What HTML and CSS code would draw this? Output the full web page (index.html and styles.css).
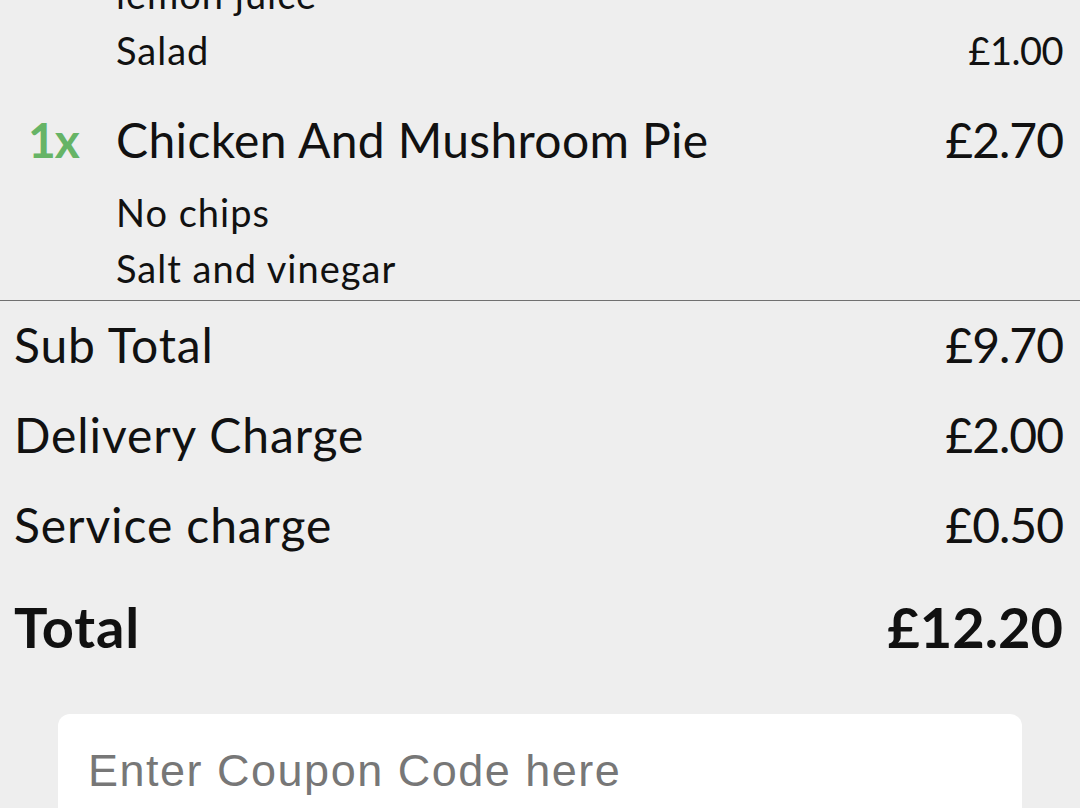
FILE: index.html
```html
<!DOCTYPE html>
<html lang="en">
<head>
<meta charset="utf-8">
<title>Basket</title>
<link rel="stylesheet" href="styles.css">
</head>
<body>
<main class="basket">
  <section class="items">
    <div class="item">
      <ul class="mods">
        <li class="mod"><span class="mod-name">lemon juice</span></li>
        <li class="mod"><span class="mod-name">Salad</span><span class="mod-price">£1.00</span></li>
      </ul>
    </div>
    <div class="item">
      <div class="item-head">
        <span class="qty">1x</span>
        <span class="item-name">Chicken And Mushroom Pie</span>
        <span class="item-price">£2.70</span>
      </div>
      <ul class="mods">
        <li class="mod"><span class="mod-name">No chips</span></li>
        <li class="mod"><span class="mod-name">Salt and vinegar</span></li>
      </ul>
    </div>
  </section>
  <section class="summary">
    <div class="sum-row"><span class="sum-label">Sub Total</span><span class="sum-value">£9.70</span></div>
    <div class="sum-row"><span class="sum-label">Delivery Charge</span><span class="sum-value">£2.00</span></div>
    <div class="sum-row"><span class="sum-label">Service charge</span><span class="sum-value">£0.50</span></div>
    <div class="sum-row total"><span class="sum-label">Total</span><span class="sum-value">£12.20</span></div>
  </section>
  <div class="coupon">
    <input class="coupon-input" type="text" placeholder="Enter Coupon Code here">
  </div>
</main>
</body>
</html>
```
FILE: styles.css
```css
html, body {
  margin: 0;
  padding: 0;
  background: #eeeeee;
  overflow: hidden;
}
body {
  font-family: Lato, "Noto Sans", sans-serif;
  color: #111111;
}
.basket {
  display: flex;
  flex-direction: column;
  margin-top: -34px;
}
.items {
  display: flex;
  flex-direction: column;
  padding-right: 17px;
}
.item + .item {
  margin-top: 30px;
}
.mods {
  list-style: none;
  margin: 0;
  padding: 0 0 0 116px;
}
.mod {
  display: flex;
  justify-content: space-between;
  font-size: 38px;
  line-height: 56px;
}
.mod-name {
  letter-spacing: 1px;
}
.mod-price {
  letter-spacing: -0.5px;
}
.item-head {
  display: grid;
  grid-template-columns: 116px 1fr auto;
  align-items: baseline;
  font-size: 48px;
  line-height: 64px;
  margin-bottom: 12px;
}
.qty {
  padding-left: 28px;
  color: #66b466;
  font-weight: 700;
  letter-spacing: -1px;
}
.item-name {
  letter-spacing: 0.35px;
}
.item-price {
  letter-spacing: -1px;
}
.summary {
  border-top: 1px solid #707070;
  margin-top: 4px;
  padding: 14px 17px 0 14px;
  display: flex;
  flex-direction: column;
  gap: 30px;
}
.sum-row {
  display: flex;
  justify-content: space-between;
  font-size: 48px;
  line-height: 60px;
}
.sum-label {
  letter-spacing: 0.9px;
}
.sum-value {
  letter-spacing: -1px;
}
.sum-row.total {
  margin-top: 7px;
  font-weight: 700;
  font-size: 56px;
  line-height: 70px;
}
.sum-row.total .sum-value {
  letter-spacing: 0;
}
.coupon {
  margin: 52px 58px 0 58px;
}
.coupon-input {
  display: block;
  width: 100%;
  box-sizing: border-box;
  height: 113px;
  border: none;
  border-radius: 12px;
  background: #ffffff;
  padding: 0 30px;
  font-family: "Liberation Sans", Arial, sans-serif;
  font-size: 45px;
  letter-spacing: 1.5px;
  color: #777777;
  outline: none;
}
.coupon-input::placeholder {
  color: #777777;
}
```
